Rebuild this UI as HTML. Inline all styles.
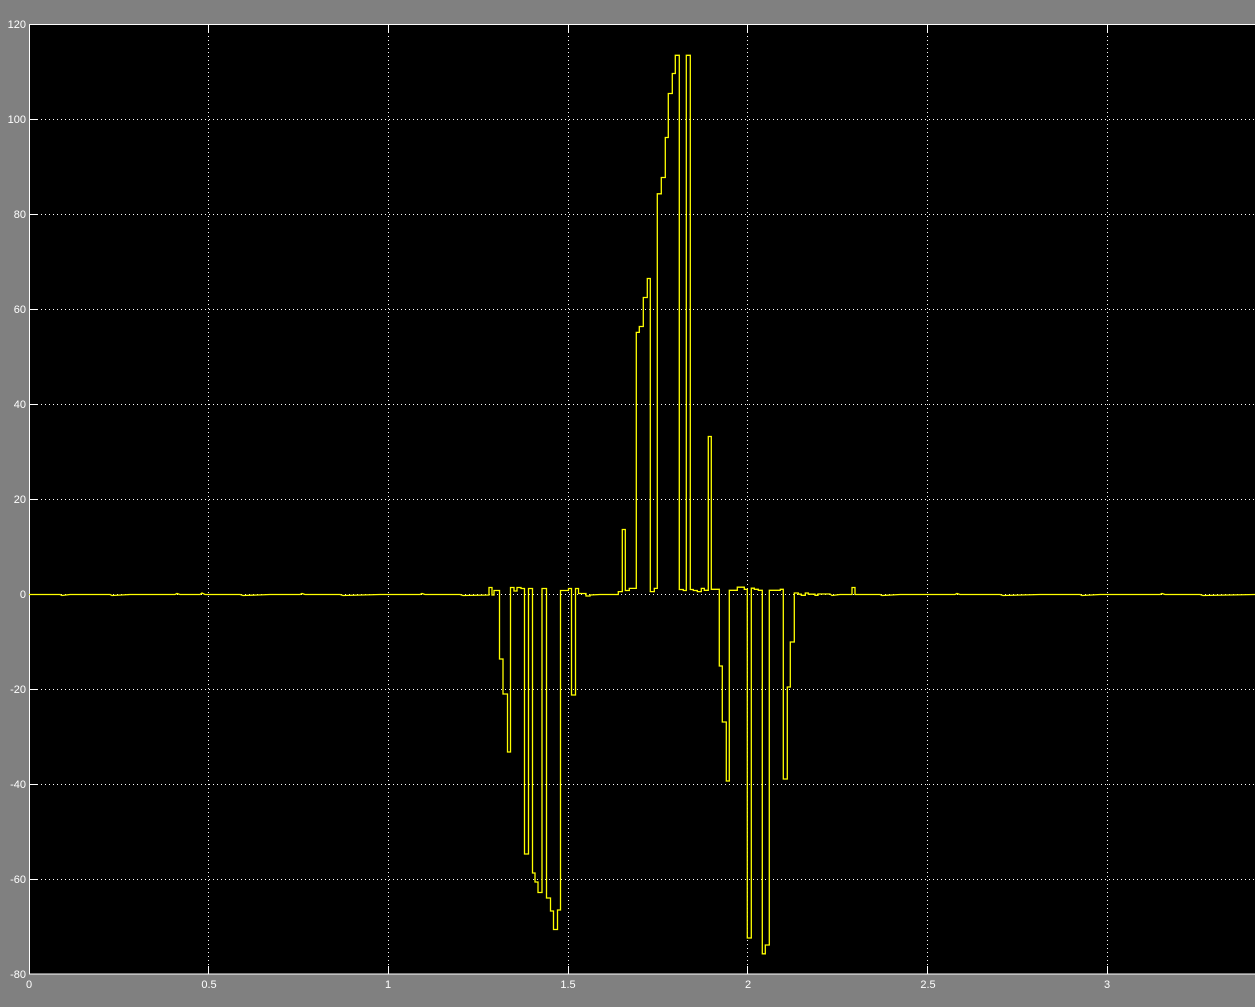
<!DOCTYPE html>
<html><head><meta charset="utf-8"><style>
html,body{margin:0;padding:0;background:#808080;width:1255px;height:1007px;overflow:hidden}
svg{display:block}
text{font-family:"Liberation Sans",sans-serif;font-size:11px;fill:#fff}
</style></head><body>
<svg width="1255" height="1007" viewBox="0 0 1255 1007" xmlns="http://www.w3.org/2000/svg">
<rect x="0" y="0" width="1255" height="1007" fill="#808080"/>
<rect x="29" y="24" width="1230" height="950" fill="#000"/>
<g stroke="#fff" stroke-width="1" stroke-dasharray="1 3" fill="none">
<line x1="29" y1="119.5" x2="1255" y2="119.5"/>
<line x1="29" y1="214.5" x2="1255" y2="214.5"/>
<line x1="29" y1="309.5" x2="1255" y2="309.5"/>
<line x1="29" y1="404.5" x2="1255" y2="404.5"/>
<line x1="29" y1="499.5" x2="1255" y2="499.5"/>
<line x1="29" y1="594.5" x2="1255" y2="594.5"/>
<line x1="29" y1="689.5" x2="1255" y2="689.5"/>
<line x1="29" y1="784.5" x2="1255" y2="784.5"/>
<line x1="29" y1="879.5" x2="1255" y2="879.5"/>
<line x1="208.5" y1="24" x2="208.5" y2="974"/>
<line x1="388.5" y1="24" x2="388.5" y2="974"/>
<line x1="568.5" y1="24" x2="568.5" y2="974"/>
<line x1="747.5" y1="24" x2="747.5" y2="974"/>
<line x1="927.5" y1="24" x2="927.5" y2="974"/>
<line x1="1107.5" y1="24" x2="1107.5" y2="974"/>
</g>
<g stroke="#fff" stroke-width="1">
<line x1="208.5" y1="974" x2="208.5" y2="966"/>
<line x1="388.5" y1="974" x2="388.5" y2="966"/>
<line x1="568.5" y1="974" x2="568.5" y2="966"/>
<line x1="747.5" y1="974" x2="747.5" y2="966"/>
<line x1="927.5" y1="974" x2="927.5" y2="966"/>
<line x1="1107.5" y1="974" x2="1107.5" y2="966"/>
<line x1="208.5" y1="24" x2="208.5" y2="32"/>
<line x1="388.5" y1="24" x2="388.5" y2="32"/>
<line x1="568.5" y1="24" x2="568.5" y2="32"/>
<line x1="747.5" y1="24" x2="747.5" y2="32"/>
<line x1="927.5" y1="24" x2="927.5" y2="32"/>
<line x1="1107.5" y1="24" x2="1107.5" y2="32"/>
<line x1="29" y1="119.5" x2="37" y2="119.5"/>
<line x1="29" y1="214.5" x2="37" y2="214.5"/>
<line x1="29" y1="309.5" x2="37" y2="309.5"/>
<line x1="29" y1="404.5" x2="37" y2="404.5"/>
<line x1="29" y1="499.5" x2="37" y2="499.5"/>
<line x1="29" y1="594.5" x2="37" y2="594.5"/>
<line x1="29" y1="689.5" x2="37" y2="689.5"/>
<line x1="29" y1="784.5" x2="37" y2="784.5"/>
<line x1="29" y1="879.5" x2="37" y2="879.5"/>
</g>
<rect x="29.5" y="24.5" width="1230" height="949.5" fill="none" stroke="#fff" stroke-width="1"/>
<polyline fill="none" stroke="#ffff00" stroke-width="1.3" points="
29,594.5 60,594.5 62,595.5 70,594.5 110,594.5 112,595.5 130,594.5 175,594.5 177,593.5 180,594.5 200,594.5 202,593 205,594.5 240,594.5 243,595.5 270,594.5 300,594.5 302,593.5 305,594.5 340,594.5 343,595.5 380,594.5 420,594.5 422,593.5 425,594.5 460,594.5 463,595.5 489,595
489,587.5 492,587.5 492,595 494,595 494,590.5 499.5,590.5 499.5,659 503,659 503,694 507.5,694 507.5,752 510.5,752 510.5,587.5 514,587.5 514,591 517,591 517,587.5 521,587.5 521,588.5 524.5,588.5 524.5,854 528.5,854 528.5,588.5 532.5,588.5 532.5,873 535,873 535,882 538,882 538,892.5 542,892.5 542,588.5 546.5,588.5 546.5,898 550.5,898 550.5,911 553.5,911 553.5,929.5 557.5,929.5 557.5,910 560.5,910 560.5,590.5 568.5,590.5 568.5,588.5 571.5,588.5 571.5,695 575.5,695 575.5,588.5 578.5,588.5 578.5,593.5 586,593.5 586,596 590,596 590,595 600,594.5
618.3,594.5 618.3,591.6 622.3,591.6 622.3,529.5 625.3,529.5 625.3,590.5 629.3,590.5 629.3,588.4 636.3,588.4 636.3,332.4 639.3,332.4 639.3,326.5 643.3,326.5 643.3,297.5 647.3,297.5 647.3,278.5 650.3,278.5 650.3,591.6 654.3,591.6 654.3,588.4 657.3,588.4 657.3,193.8 661.3,193.8 661.3,177.5 665.3,177.5 665.3,137.5 668.3,137.5 668.3,93.5 672.3,93.5 672.3,73.5 675.3,73.5 675.3,55.3 679.3,55.3 679.3,589.5 683.3,589.5 683.3,590.5 686.3,590.5 686.3,55.3 690.3,55.3 690.3,589.5 693.3,589.5 693.3,590.5 697.3,590.5 697.3,591.6 701.3,591.6 701.3,588.4 704.3,588.4 704.3,590.3 708.3,590.3 708.3,436.5 711.3,436.5 711.3,589.3 719.3,589.3 719.3,666 722.3,666 722.3,722 726.3,722 726.3,781 729.3,781 729.3,590.3 737.3,590.3 737.3,587.2 744.3,587.2 744.3,589.3 747.3,589.3 747.3,938 751.3,938 751.3,588.2 754.3,588.2 754.3,589.3 758.3,589.3 758.3,590.3 762.3,590.3 762.3,953.8 765.3,953.8 765.3,945 769.3,945 769.3,590.3 780.3,590.3 780.3,589.3 783.3,589.3 783.3,779 787.3,779 787.3,687 790.3,687 790.3,642 794.3,642 794.3,593 798.3,593 798.3,594.2 801.3,594.2 801.3,595.3 805.3,595.3 805.3,593 808.3,593 808.3,594.2 815,594.2 815,595.3 818,595.3 818,594 830,594 832,595.5 840,594.5 852,594.5 852,587.5 855,587.5 855,594.5 880,594.5 882,595.5 900,594.5 955,594.5 957,593.5 960,594.5 1000,594.5 1003,595.5 1040,594.5 1080,594.5 1082,595.5 1100,594.5 1160,594.5 1162,593.5 1165,594.5 1200,594.5 1203,595.5 1255,594.5"/>
<g text-anchor="end">
<text x="26" y="28">120</text>
<text x="26" y="123">100</text>
<text x="26" y="218">80</text>
<text x="26" y="313">60</text>
<text x="26" y="408">40</text>
<text x="26" y="503">20</text>
<text x="26" y="598">0</text>
<text x="26" y="693">-20</text>
<text x="26" y="788">-40</text>
<text x="26" y="883">-60</text>
<text x="26" y="978">-80</text>
</g>
<g text-anchor="middle">
<text x="29" y="988">0</text>
<text x="209" y="988">0.5</text>
<text x="388" y="988">1</text>
<text x="568" y="988">1.5</text>
<text x="748" y="988">2</text>
<text x="928" y="988">2.5</text>
<text x="1107" y="988">3</text>
</g>
</svg>
</body></html>
